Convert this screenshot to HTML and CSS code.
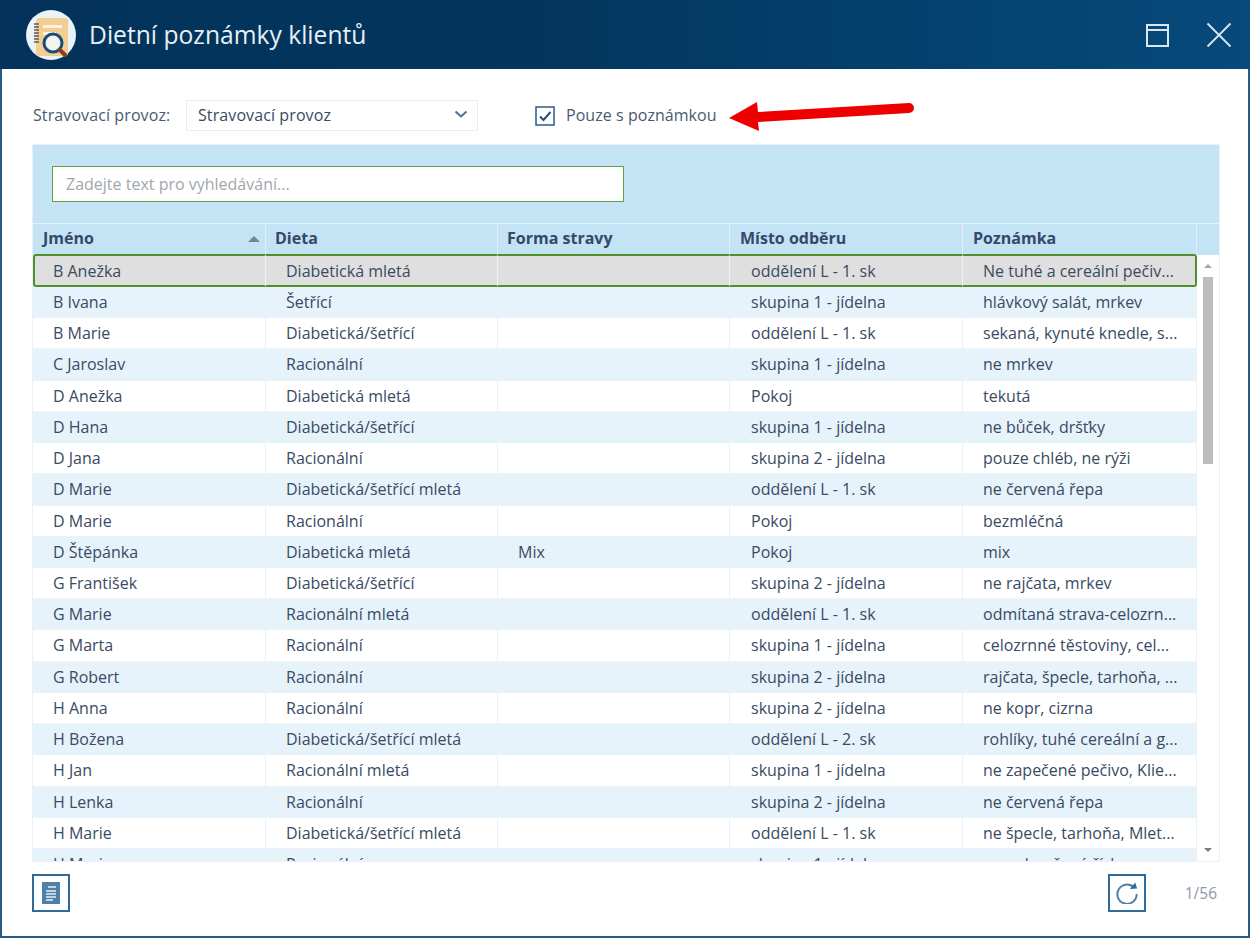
FILE: index.html
```html
<!DOCTYPE html>
<html lang="cs">
<head>
<meta charset="utf-8">
<title>Dietní poznámky klientů</title>
<link rel="stylesheet" href="styles.css">
</head>
<body>
<div class="window">
  <header class="titlebar">
    <div class="logo">
      <svg width="50" height="50" viewBox="0 0 50 50">
        <circle cx="25" cy="25" r="25" fill="#e9f3f8"/>
        <rect x="10" y="8" width="32" height="38" rx="3" fill="#f4cd92"/>
        <rect x="17" y="15" width="19" height="3" fill="#fdf3df"/>
        <rect x="17" y="22" width="13" height="3" fill="#fdf3df"/>
        <path d="M8 14h5M8 17h5M8 20h5M8 23h5M8 26h5M8 29h5M8 32h5" stroke="#5d5a58" stroke-width="1.4"/>
        <circle cx="27" cy="33" r="9" fill="#f4f4f0" stroke="#154e7c" stroke-width="3"/>
        <path d="M34 40l5 5" stroke="#8a3f25" stroke-width="4" stroke-linecap="round"/>
      </svg>
    </div>
    <h1 class="title">Dietní poznámky klientů</h1>
    <div class="winbtns">
      <svg width="24" height="24" viewBox="0 0 24 24" fill="none" stroke="#dbe6ee" stroke-width="2"><rect x="2" y="2" width="21" height="21"/><path d="M2 7h21"/></svg>
      <svg width="26" height="26" viewBox="0 0 26 26" fill="none" stroke="#dbe6ee" stroke-width="1.8"><path d="M1.500 1.500l23 23M24.500 1.500l-23 23"/></svg>
    </div>
  </header>
  <main class="content">
    <div class="filters">
      <label class="flabel">Stravovací provoz:</label>
      <div class="select">
        <span>Stravovací provoz</span>
        <svg width="14" height="9" viewBox="0 0 14 9" fill="none" stroke="#4a7199" stroke-width="2"><path d="M1.500 1.500l5.500 5 5.500-5"/></svg>
      </div>
      <div class="check">
        <svg width="20" height="20" viewBox="0 0 20 20" fill="none"><rect x="1" y="1" width="18" height="18" stroke="#2a5b8c" stroke-width="1.500"/><path d="M5 10.500l3.500 3.500 7-8" stroke="#1f4f80" stroke-width="2"/></svg>
        <span>Pouze s poznámkou</span>
      </div>
      <svg class="arrow" width="190" height="36" viewBox="0 0 190 36"><path d="M0 21L28 5l1 10 151-9a5 5 0 0 1 0 10L29 25l1 9z" fill="#ef0000"/></svg>
    </div>
    <section class="panel">
      <div class="search"><div class="searchbox">Zadejte text pro vyhledávání...</div></div>
      <div class="thead">
        <div class="th th-sort">Jméno<i class="sort"></i></div>
        <div class="th">Dieta</div>
        <div class="th">Forma stravy</div>
        <div class="th">Místo odběru</div>
        <div class="th">Poznámka</div>
        <div class="th-end"></div>
      </div>
      <div class="tbody">
        <div class="rows">
          <div class="row sel"><div>B Anežka</div><div>Diabetická mletá</div><div></div><div>oddělení L - 1. sk</div><div>Ne tuhé a cereální pečiv...</div></div>
          <div class="row"><div>B Ivana</div><div>Šetřící</div><div></div><div>skupina 1 - jídelna</div><div>hlávkový salát, mrkev</div></div>
          <div class="row"><div>B Marie</div><div>Diabetická/šetřící</div><div></div><div>oddělení L - 1. sk</div><div>sekaná, kynuté knedle, s...</div></div>
          <div class="row"><div>C Jaroslav</div><div>Racionální</div><div></div><div>skupina 1 - jídelna</div><div>ne mrkev</div></div>
          <div class="row"><div>D Anežka</div><div>Diabetická mletá</div><div></div><div>Pokoj</div><div>tekutá</div></div>
          <div class="row"><div>D Hana</div><div>Diabetická/šetřící</div><div></div><div>skupina 1 - jídelna</div><div>ne bůček, dršťky</div></div>
          <div class="row"><div>D Jana</div><div>Racionální</div><div></div><div>skupina 2 - jídelna</div><div>pouze chléb, ne rýži</div></div>
          <div class="row"><div>D Marie</div><div>Diabetická/šetřící mletá</div><div></div><div>oddělení L - 1. sk</div><div>ne červená řepa</div></div>
          <div class="row"><div>D Marie</div><div>Racionální</div><div></div><div>Pokoj</div><div>bezmléčná</div></div>
          <div class="row"><div>D Štěpánka</div><div>Diabetická mletá</div><div>Mix</div><div>Pokoj</div><div>mix</div></div>
          <div class="row"><div>G František</div><div>Diabetická/šetřící</div><div></div><div>skupina 2 - jídelna</div><div>ne rajčata, mrkev</div></div>
          <div class="row"><div>G Marie</div><div>Racionální mletá</div><div></div><div>oddělení L - 1. sk</div><div>odmítaná strava-celozrn...</div></div>
          <div class="row"><div>G Marta</div><div>Racionální</div><div></div><div>skupina 1 - jídelna</div><div>celozrnné těstoviny, cel...</div></div>
          <div class="row"><div>G Robert</div><div>Racionální</div><div></div><div>skupina 2 - jídelna</div><div>rajčata, špecle, tarhoňa, ...</div></div>
          <div class="row"><div>H Anna</div><div>Racionální</div><div></div><div>skupina 2 - jídelna</div><div>ne kopr, cizrna</div></div>
          <div class="row"><div>H Božena</div><div>Diabetická/šetřící mletá</div><div></div><div>oddělení L - 2. sk</div><div>rohlíky, tuhé cereální a g...</div></div>
          <div class="row"><div>H Jan</div><div>Racionální mletá</div><div></div><div>skupina 1 - jídelna</div><div>ne zapečené pečivo, Klie...</div></div>
          <div class="row"><div>H Lenka</div><div>Racionální</div><div></div><div>skupina 2 - jídelna</div><div>ne červená řepa</div></div>
          <div class="row"><div>H Marie</div><div>Diabetická/šetřící mletá</div><div></div><div>oddělení L - 1. sk</div><div>ne špecle, tarhoňa, Mlet...</div></div>
          <div class="row"><div>H Marie</div><div>Racionální</div><div></div><div>skupina 1 - jídelna</div><div>ne pekoučené řízky</div></div>
        </div>
        <div class="scrollbar">
          <i class="up"></i>
          <div class="track"><div class="thumb"></div></div>
          <i class="down"></i>
        </div>
      </div>
    </section>
    <footer class="footer">
      <button class="iconbtn" type="button">
        <svg width="18" height="22" viewBox="0 0 18 22"><rect width="18" height="22" fill="#4f81a8"/><path d="M6 5h8M4 9h10M4 12h10M4 15h10M4 18h7" stroke="#e8f0f6" stroke-width="1.300"/></svg>
      </button>
      <div class="spacer"></div>
      <button class="iconbtn" type="button">
        <svg width="22" height="22" viewBox="0 0 24 24" fill="none"><path d="M19.500 6A10.500 10.500 0 1 0 22.500 13" stroke="#4f81a8" stroke-width="2.200"/><path d="M15 7.500l8-.5-2-6.500z" fill="#2f6a98"/></svg>
      </button>
      <span class="pager">1/56</span>
    </footer>
  </main>
</div>
</body>
</html>
```
FILE: styles.css
```css
* { box-sizing: border-box; }
html, body { margin: 0; height: 100%; overflow: hidden; background: #fff; }
body { font-family: "Open Sans", "Noto Sans", sans-serif; font-size: 16px; color: #3a4a63; }
.window { width: 1250px; height: 938px; display: flex; flex-direction: column; border: 1px solid #2b5a80; border-width: 0 2px 2px 2px; }
.titlebar { height: 69px; margin: 0 -2px; flex: none; display: flex; align-items: center; padding: 0 18px 0 26px; background: linear-gradient(90deg, #03335a 0%, #03355d 40%, #064a7b 100%); }
.logo { width: 50px; height: 50px; flex: none; }
.logo svg { display: block; }
.title { margin: 0 0 0 13px; font-size: 24.650px; font-weight: 400; color: #e6f0f6; flex: 1; }
.winbtns { display: flex; align-items: center; gap: 37px; }
.winbtns svg { display: block; }
.content { flex: 1; display: flex; flex-direction: column; padding: 31px 28px 0 30px; min-height: 0; }
.filters { height: 31px; padding-left: 1px; display: flex; align-items: center; position: relative; flex: none; }
.flabel { width: 153px; color: #4a5a70; line-height: 29px; letter-spacing: 0.100px; }
.select { width: 292px; height: 31px; padding: 0 9px 2px 11px; display: flex; align-items: center; justify-content: space-between; border: 1px solid #e8edf6; color: #3a4a63; letter-spacing: 0.100px; }
.check { margin-left: 57px; display: flex; align-items: center; gap: 11px; color: #4a5a70; letter-spacing: 0.050px; }
.check span { padding-bottom: 2px; }
.check svg { display: block; }
.arrow { position: absolute; left: 697px; top: -3px; }
.panel { margin-top: 13px; flex: none; width: 1188px; height: 718px; display: flex; flex-direction: column; border: 1px solid #e9f1f7; overflow: hidden; }
.search { height: 79px; flex: none; background: #c4e3f4; padding: 21px 0 0 19px; border-bottom: 1px solid #e2f1fa; }
.searchbox { width: 572px; height: 36px; background: #fff; border: 1px solid #63a23f; padding-left: 13px; line-height: 34px; font-size: 16px; color: #a2a7ad; }
.thead { height: 31px; flex: none; display: grid; grid-template-columns: 233px 232px 232px 233px 234px 1fr; background: #c4e3f4; }
.th { font-weight: 700; color: #34496a; padding: 3px 0 0 9px; border-right: 1px solid #e0f0fa; position: relative; line-height: 22px; }
.th:first-child, .th:nth-child(4), .th:nth-child(5) { padding-left: 10px; }
.th-end { background: #c4e3f4; }
.sort { position: absolute; right: 5px; top: 12px; border: 6px solid transparent; border-top: 0; border-bottom: 6px solid #7a8590; }
.tbody { flex: 1; display: flex; min-height: 0; }
.rows { width: 1164px; flex: none; display: grid; grid-template-columns: 233px 232px 232px 233px 234px; grid-template-rows: 33px; grid-auto-rows: 31.220px; align-content: start; margin-top: -1px; position: relative; }
.row { display: contents; }
.row > div { padding: 0 8px 0 20px; line-height: 31px; border-right: 1px solid #e8f0f8; white-space: nowrap; overflow: hidden; }
.row > div:nth-child(4) { padding-left: 21px; }
.row:nth-child(odd) > div { background: #fff; border-bottom: 1px solid #eef4f9; }
.row:nth-child(even) > div { background: #e6f3fb; }
.row.sel > div { background: #dfdfdf; border-top: 2px solid #4f8f2c; border-bottom: 2px solid #4f8f2c; border-right: 1px solid #f0f0f0; line-height: 31px; }
.row.sel > div:first-child { border-left: 2px solid #4f8f2c; padding-left: 18px; border-radius: 3px 0 0 3px; }
.row.sel > div:last-child { border-right: 2px solid #4f8f2c; border-radius: 0 3px 3px 0; }
.scrollbar { flex: 1; display: flex; flex-direction: column; align-items: center; background: #fff; padding: 9px 0 9px 0; }
.up { border: 4px solid transparent; border-top: 0; border-bottom: 4px solid #a8a8a8; flex: none; }
.down { border: 4px solid transparent; border-bottom: 0; border-top: 4px solid #7d7d7d; flex: none; }
.track { flex: 1; width: 10px; padding-top: 9px; }
.thumb { height: 187px; background: #bdbdbd; }
.footer { flex: none; display: flex; align-items: center; margin-top: 12px; height: 38px; }
.iconbtn { width: 38px; height: 38px; padding: 0; background: #fff; border: 2px solid #2f6a98; display: flex; align-items: center; justify-content: center; }
.iconbtn svg { display: block; }
.spacer { flex: 1; }
.pager { width: 74px; text-align: right; padding-right: 3px; font-size: 15.500px; color: #8d9aa8; }
```
